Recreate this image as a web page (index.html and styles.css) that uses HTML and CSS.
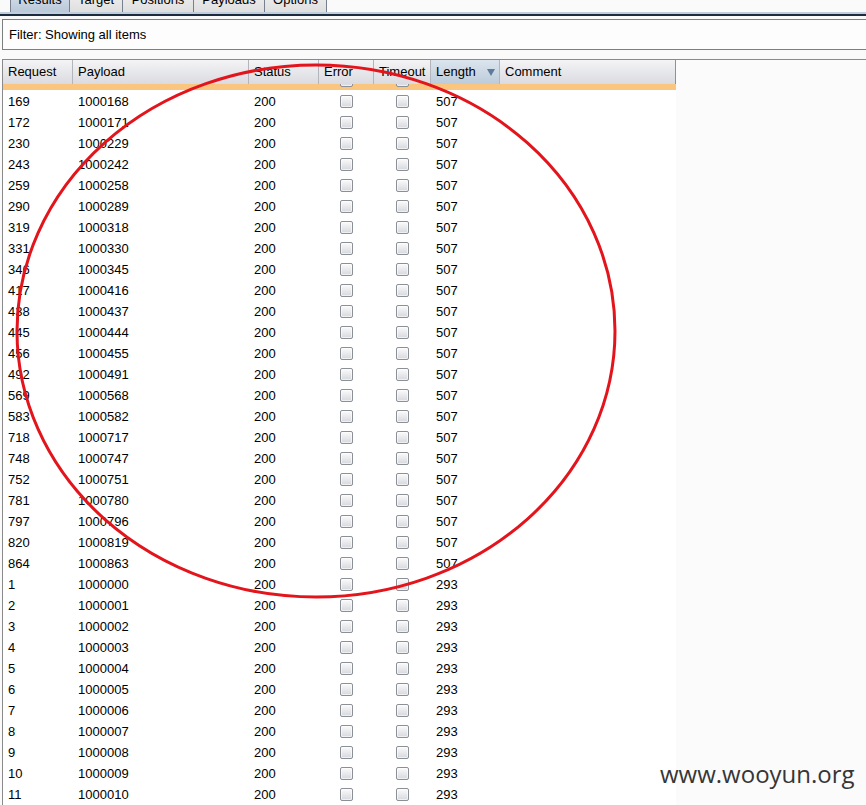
FILE: index.html
```html
<!DOCTYPE html>
<html>
<head>
<meta charset="utf-8">
<link rel="stylesheet" href="styles.css">
</head>
<body>
<div class="tabs">
  <div class="tab tab-active w-results">Results</div>
  <div class="tab w-target">Target</div>
  <div class="tab w-positions">Positions</div>
  <div class="tab w-payloads">Payloads</div>
  <div class="tab tab-last w-options">Options</div>
</div>
<div class="tabline"></div>
<div class="filter">Filter: Showing all items</div>
<div class="pane">
  <div class="table">
    <div class="thead">
      <div class="th">Request</div>
      <div class="th">Payload</div>
      <div class="th">Status</div>
      <div class="th">Error</div>
      <div class="th">Timeout</div>
      <div class="th th-sorted">Length<svg class="sort" width="8" height="7" viewBox="0 0 8 7"><path d="M0 0H8L4 7Z" fill="#5d7c9c"/></svg></div>
      <div class="th th-last">Comment</div>
    </div>
    <div class="tbody">
      <div class="rows">
        <div class="row row-sel"><span></span><span></span><span></span><span class="c"><i class="cb"></i></span><span class="c"><i class="cb"></i></span><span></span><span></span></div>
        <div class="row"><span>169</span><span>1000168</span><span>200</span><span class="c"><i class="cb"></i></span><span class="c"><i class="cb"></i></span><span>507</span><span></span></div>
        <div class="row"><span>172</span><span>1000171</span><span>200</span><span class="c"><i class="cb"></i></span><span class="c"><i class="cb"></i></span><span>507</span><span></span></div>
        <div class="row"><span>230</span><span>1000229</span><span>200</span><span class="c"><i class="cb"></i></span><span class="c"><i class="cb"></i></span><span>507</span><span></span></div>
        <div class="row"><span>243</span><span>1000242</span><span>200</span><span class="c"><i class="cb"></i></span><span class="c"><i class="cb"></i></span><span>507</span><span></span></div>
        <div class="row"><span>259</span><span>1000258</span><span>200</span><span class="c"><i class="cb"></i></span><span class="c"><i class="cb"></i></span><span>507</span><span></span></div>
        <div class="row"><span>290</span><span>1000289</span><span>200</span><span class="c"><i class="cb"></i></span><span class="c"><i class="cb"></i></span><span>507</span><span></span></div>
        <div class="row"><span>319</span><span>1000318</span><span>200</span><span class="c"><i class="cb"></i></span><span class="c"><i class="cb"></i></span><span>507</span><span></span></div>
        <div class="row"><span>331</span><span>1000330</span><span>200</span><span class="c"><i class="cb"></i></span><span class="c"><i class="cb"></i></span><span>507</span><span></span></div>
        <div class="row"><span>346</span><span>1000345</span><span>200</span><span class="c"><i class="cb"></i></span><span class="c"><i class="cb"></i></span><span>507</span><span></span></div>
        <div class="row"><span>417</span><span>1000416</span><span>200</span><span class="c"><i class="cb"></i></span><span class="c"><i class="cb"></i></span><span>507</span><span></span></div>
        <div class="row"><span>438</span><span>1000437</span><span>200</span><span class="c"><i class="cb"></i></span><span class="c"><i class="cb"></i></span><span>507</span><span></span></div>
        <div class="row"><span>445</span><span>1000444</span><span>200</span><span class="c"><i class="cb"></i></span><span class="c"><i class="cb"></i></span><span>507</span><span></span></div>
        <div class="row"><span>456</span><span>1000455</span><span>200</span><span class="c"><i class="cb"></i></span><span class="c"><i class="cb"></i></span><span>507</span><span></span></div>
        <div class="row"><span>492</span><span>1000491</span><span>200</span><span class="c"><i class="cb"></i></span><span class="c"><i class="cb"></i></span><span>507</span><span></span></div>
        <div class="row"><span>569</span><span>1000568</span><span>200</span><span class="c"><i class="cb"></i></span><span class="c"><i class="cb"></i></span><span>507</span><span></span></div>
        <div class="row"><span>583</span><span>1000582</span><span>200</span><span class="c"><i class="cb"></i></span><span class="c"><i class="cb"></i></span><span>507</span><span></span></div>
        <div class="row"><span>718</span><span>1000717</span><span>200</span><span class="c"><i class="cb"></i></span><span class="c"><i class="cb"></i></span><span>507</span><span></span></div>
        <div class="row"><span>748</span><span>1000747</span><span>200</span><span class="c"><i class="cb"></i></span><span class="c"><i class="cb"></i></span><span>507</span><span></span></div>
        <div class="row"><span>752</span><span>1000751</span><span>200</span><span class="c"><i class="cb"></i></span><span class="c"><i class="cb"></i></span><span>507</span><span></span></div>
        <div class="row"><span>781</span><span>1000780</span><span>200</span><span class="c"><i class="cb"></i></span><span class="c"><i class="cb"></i></span><span>507</span><span></span></div>
        <div class="row"><span>797</span><span>1000796</span><span>200</span><span class="c"><i class="cb"></i></span><span class="c"><i class="cb"></i></span><span>507</span><span></span></div>
        <div class="row"><span>820</span><span>1000819</span><span>200</span><span class="c"><i class="cb"></i></span><span class="c"><i class="cb"></i></span><span>507</span><span></span></div>
        <div class="row"><span>864</span><span>1000863</span><span>200</span><span class="c"><i class="cb"></i></span><span class="c"><i class="cb"></i></span><span>507</span><span></span></div>
        <div class="row"><span>1</span><span>1000000</span><span>200</span><span class="c"><i class="cb"></i></span><span class="c"><i class="cb"></i></span><span>293</span><span></span></div>
        <div class="row"><span>2</span><span>1000001</span><span>200</span><span class="c"><i class="cb"></i></span><span class="c"><i class="cb"></i></span><span>293</span><span></span></div>
        <div class="row"><span>3</span><span>1000002</span><span>200</span><span class="c"><i class="cb"></i></span><span class="c"><i class="cb"></i></span><span>293</span><span></span></div>
        <div class="row"><span>4</span><span>1000003</span><span>200</span><span class="c"><i class="cb"></i></span><span class="c"><i class="cb"></i></span><span>293</span><span></span></div>
        <div class="row"><span>5</span><span>1000004</span><span>200</span><span class="c"><i class="cb"></i></span><span class="c"><i class="cb"></i></span><span>293</span><span></span></div>
        <div class="row"><span>6</span><span>1000005</span><span>200</span><span class="c"><i class="cb"></i></span><span class="c"><i class="cb"></i></span><span>293</span><span></span></div>
        <div class="row"><span>7</span><span>1000006</span><span>200</span><span class="c"><i class="cb"></i></span><span class="c"><i class="cb"></i></span><span>293</span><span></span></div>
        <div class="row"><span>8</span><span>1000007</span><span>200</span><span class="c"><i class="cb"></i></span><span class="c"><i class="cb"></i></span><span>293</span><span></span></div>
        <div class="row"><span>9</span><span>1000008</span><span>200</span><span class="c"><i class="cb"></i></span><span class="c"><i class="cb"></i></span><span>293</span><span></span></div>
        <div class="row"><span>10</span><span>1000009</span><span>200</span><span class="c"><i class="cb"></i></span><span class="c"><i class="cb"></i></span><span>293</span><span></span></div>
        <div class="row"><span>11</span><span>1000010</span><span>200</span><span class="c"><i class="cb"></i></span><span class="c"><i class="cb"></i></span><span>293</span><span></span></div>
      </div>
    </div>
  </div>
</div>
<svg class="annot" width="866" height="805" viewBox="0 0 866 805">
  <ellipse cx="316" cy="331" rx="299" ry="266" fill="none" stroke="#e3141b" stroke-width="3"/>
</svg>
<div class="watermark">www.wooyun.org</div>
</body>
</html>
```
FILE: styles.css
```css
html, body {
  margin: 0;
  padding: 0;
}
body {
  width: 866px;
  height: 805px;
  overflow: hidden;
  position: relative;
  background: #fafafa;
  font-family: "Liberation Sans", Arial, sans-serif;
  font-size: 13px;
  color: #000;
}
.tabs {
  display: flex;
  margin-top: -12px;
  padding-left: 10px;
  height: 24px;
}
.tab {
  box-sizing: border-box;
  height: 24px;
  line-height: 22px;
  text-align: center;
  border: 1px solid #76818d;
  border-right: none;
  border-bottom: none;
  background: linear-gradient(#f2f2f2, #dfdfdf);
}
.tab-last {
  border-right: 1px solid #76818d;
}
.tab-active {
  background: linear-gradient(#dbe4ee, #b9c8d8);
}
.w-results { width: 59px; }
.w-target { width: 53px; }
.w-positions { width: 71px; }
.w-payloads { width: 71px; }
.w-options { width: 63px; }
.tabline {
  height: 0;
  border-top: 2px solid #c0cddc;
  border-bottom: 2px solid #1d2b3f;
}
.filter {
  margin-top: 3px;
  margin-left: 2px;
  height: 29px;
  line-height: 29px;
  padding-left: 6px;
  border: 1px solid #7e7e7e;
  border-right: none;
  background: #fdfdfd;
}
.pane {
  margin-top: 9px;
  margin-left: 2px;
  border-top: 1px solid #8a8a8a;
  border-left: 1px solid #8a8a8a;
  height: 745px;
  background: #fbfbfb;
}
.table {
  width: 673px;
}
.thead {
  display: grid;
  grid-template-columns: 70px 176px 70px 55px 57px 69px 176px;
  height: 24px;
  position: relative;
  z-index: 1;
}
.th {
  box-sizing: border-box;
  height: 24px;
  line-height: 24px;
  padding-left: 5px;
  border-right: 1px solid #b3b5bd;
  background: linear-gradient(#f4f4f6, #dadbe1);
  position: relative;
  white-space: nowrap;
}
.th-last {
  border-right: 1px solid #8f9197;
}
.th-sorted {
  background: linear-gradient(#dce5ee, #bccbda);
}
.sort {
  position: absolute;
  left: 56px;
  top: 9px;
}
.tbody {
  height: 721px;
  overflow: hidden;
  background: #fff;
}
.rows {
  margin-top: -15px;
}
.row {
  display: grid;
  grid-template-columns: 70px 176px 70px 55px 57px 69px 176px;
  box-sizing: border-box;
  height: 21px;
  padding-top: 2px;
  line-height: 19px;
  background: #fff;
}
.row > span {
  padding-left: 5px;
  white-space: nowrap;
}
.row > span.c {
  padding-left: 0;
  display: flex;
  align-items: center;
  justify-content: center;
}
.row-sel {
  background: #fac67f;
}
.cb {
  display: block;
  box-sizing: border-box;
  width: 13px;
  height: 13px;
  border: 1px solid #8b8f96;
  border-radius: 2px;
  background: linear-gradient(#fbfbfb, #d7d8dd);
  box-shadow: inset 0 0 0 1px rgba(255,255,255,0.6);
}
.annot {
  position: absolute;
  left: 0;
  top: 0;
  pointer-events: none;
  z-index: 5;
}
.watermark {
  position: absolute;
  left: 660px;
  top: 762px;
  font-family: "Open Sans", "DejaVu Sans", sans-serif;
  font-size: 24px;
  line-height: 24px;
  color: #363636;
  z-index: 6;
  white-space: nowrap;
}
```
